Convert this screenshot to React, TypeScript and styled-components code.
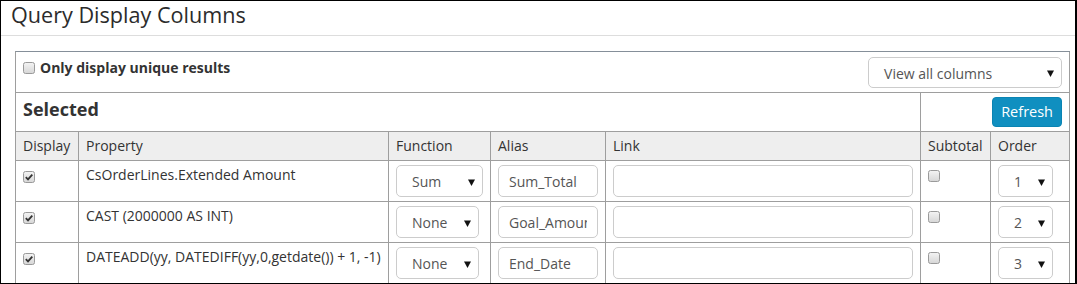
import React from 'react';
import styled, { createGlobalStyle } from 'styled-components';

const GlobalStyle = createGlobalStyle`
  html, body {
    margin: 0;
    padding: 0;
    background: #fff;
  }
  body {
    font-family: "Open Sans", "Liberation Sans", sans-serif;
    font-size: 14px;
    color: #333;
  }
`;

const Frame = styled.div`
  width: 1077px;
  height: 284px;
  box-sizing: border-box;
  border: 1px solid #000;
  border-right-width: 2px;
  overflow: hidden;
`;

const TitleBar = styled.div`
  height: 34px;
  padding: 0 10px;
  border-bottom: 1px solid #ddd;
`;

const Title = styled.h2`
  margin: 0;
  font-size: 21.6px;
  font-weight: 400;
  line-height: 27px;
  color: #2b2b2b;
`;

const Panel = styled.table`
  margin: 15px 0 0 14px;
  width: 1055px;
  table-layout: fixed;
  border-collapse: separate;
  border-spacing: 0;
  border-left: 1px solid #9e9e9e;
  border-top: 1px solid #858f99;
`;

const Cell = styled.td<{ $head?: boolean }>`
  box-sizing: border-box;
  padding: 4px 7px;
  border-right: 1px solid #9e9e9e;
  border-bottom: 1px solid #9e9e9e;
  vertical-align: top;
  text-align: left;
  font-weight: 400;
  line-height: 20px;
  background: ${(p) => (p.$head ? '#eeeeee' : '#fff')};
  white-space: nowrap;
`;

const TopBar = styled.div`
  display: flex;
  justify-content: space-between;
  align-items: flex-start;
  padding: 1px 0 0 0;
`;

const OptionLabel = styled.label`
  display: flex;
  align-items: center;
  gap: 5px;
  padding-top: 1px;
  font-weight: 700;
  font-size: 14px;
  line-height: 20px;
  color: #333;
`;

const SelectedBar = styled.div`
  padding-top: 1px;
  font-size: 18px;
  font-weight: 700;
  line-height: 22px;
  color: #333;
`;

const RightBar = styled.div`
  display: flex;
  justify-content: flex-end;
`;

const RefreshButton = styled.button`
  height: 30px;
  width: 70px;
  padding: 0;
  border: 1px solid #0a84b3;
  border-radius: 4px;
  background: #108fc0;
  color: #fff;
  font-family: "Open Sans", "Liberation Sans", sans-serif;
  font-size: 14.5px;
  line-height: 28px;
`;

const SelectBox = styled.div<{ $w: number; $h?: number }>`
  box-sizing: border-box;
  width: ${(p) => p.$w}px;
  height: ${(p) => p.$h ?? 32}px;
  display: flex;
  align-items: center;
  justify-content: space-between;
  padding: 2px 7px 0 15px;
  border: 1px solid #ccc;
  border-radius: 5px;
  background: #fff;
  color: #555;
  font-size: 14px;
`;

const TextInput = styled.input`
  box-sizing: border-box;
  display: block;
  width: 100%;
  height: 32px;
  padding: 0 10px;
  border: 1px solid #ccc;
  border-radius: 5px;
  background: #fff;
  color: #555;
  font-family: "Open Sans", "Liberation Sans", sans-serif;
  font-size: 14px;
  outline: none;
`;

const CheckWrap = styled.span<{ $top?: number }>`
  display: block;
  width: 12px;
  height: 12px;
  margin-top: ${(p) => p.$top ?? 0}px;
  line-height: 0;
`;

const Arrow = () => (
  <svg width="7" height="7" viewBox="0 0 7 7">
    <path d="M0 0.5 H7 L3.5 7 Z" fill="#111" />
  </svg>
);

const Check = ({ checked, top }: { checked?: boolean; top?: number }) => (
  <CheckWrap $top={top}>
    <svg width="12" height="12" viewBox="0 0 12 12">
      <defs>
        <linearGradient id="cbg" x1="0" y1="0" x2="0" y2="1">
          <stop offset="0" stopColor="#f4f4f4" />
          <stop offset="1" stopColor="#d6d6d6" />
        </linearGradient>
      </defs>
      <rect x="0.5" y="0.5" width="11" height="11" rx="2" fill="url(#cbg)" stroke="#9a9a9a" />
      {checked && (
        <path d="M2.8 6.2 L5 8.4 L9.3 3.6" fill="none" stroke="#333" strokeWidth="1.8" />
      )}
    </svg>
  </CheckWrap>
);

const Select = ({ value, w, h }: { value: string; w: number; h?: number }) => (
  <SelectBox $w={w} $h={h}>
    <span>{value}</span>
    <Arrow />
  </SelectBox>
);

const rows = [
  { prop: 'CsOrderLines.Extended Amount', fn: 'Sum', fnW: 87, alias: 'Sum_Total', order: '1' },
  { prop: 'CAST (2000000 AS INT)', fn: 'None', fnW: 83, alias: 'Goal_Amount', order: '2' },
  { prop: 'DATEADD(yy, DATEDIFF(yy,0,getdate()) + 1, -1)', fn: 'None', fnW: 83, alias: 'End_Date', order: '3' },
];

export default function App() {
  return (
    <>
      <GlobalStyle />
      <Frame>
        <TitleBar>
          <Title>Query Display Columns</Title>
        </TitleBar>
        <Panel>
          <colgroup>
            <col style={{ width: 63 }} />
            <col style={{ width: 310 }} />
            <col style={{ width: 102 }} />
            <col style={{ width: 115 }} />
            <col style={{ width: 315 }} />
            <col style={{ width: 70 }} />
            <col style={{ width: 79 }} />
          </colgroup>
          <tbody>
            <tr>
              <Cell colSpan={7}>
                <TopBar>
                  <OptionLabel>
                    <Check />
                    Only display unique results
                  </OptionLabel>
                  <Select value="View all columns" w={194} h={31} />
                </TopBar>
              </Cell>
            </tr>
            <tr>
              <Cell colSpan={5}>
                <SelectedBar>Selected</SelectedBar>
              </Cell>
              <Cell colSpan={2}>
                <RightBar>
                  <RefreshButton>Refresh</RefreshButton>
                </RightBar>
              </Cell>
            </tr>
            <tr>
              <Cell as="th" $head>Display</Cell>
              <Cell as="th" $head>Property</Cell>
              <Cell as="th" $head>Function</Cell>
              <Cell as="th" $head>Alias</Cell>
              <Cell as="th" $head>Link</Cell>
              <Cell as="th" $head>Subtotal</Cell>
              <Cell as="th" $head>Order</Cell>
            </tr>
            {rows.map((r) => (
              <tr key={r.order}>
                <Cell>
                  <Check checked top={6} />
                </Cell>
                <Cell>{r.prop}</Cell>
                <Cell>
                  <Select value={r.fn} w={r.fnW} />
                </Cell>
                <Cell>
                  <TextInput readOnly defaultValue={r.alias} />
                </Cell>
                <Cell>
                  <TextInput readOnly defaultValue="" />
                </Cell>
                <Cell>
                  <Check top={5} />
                </Cell>
                <Cell>
                  <Select value={r.order} w={55} />
                </Cell>
              </tr>
            ))}
          </tbody>
        </Panel>
      </Frame>
    </>
  );
}
